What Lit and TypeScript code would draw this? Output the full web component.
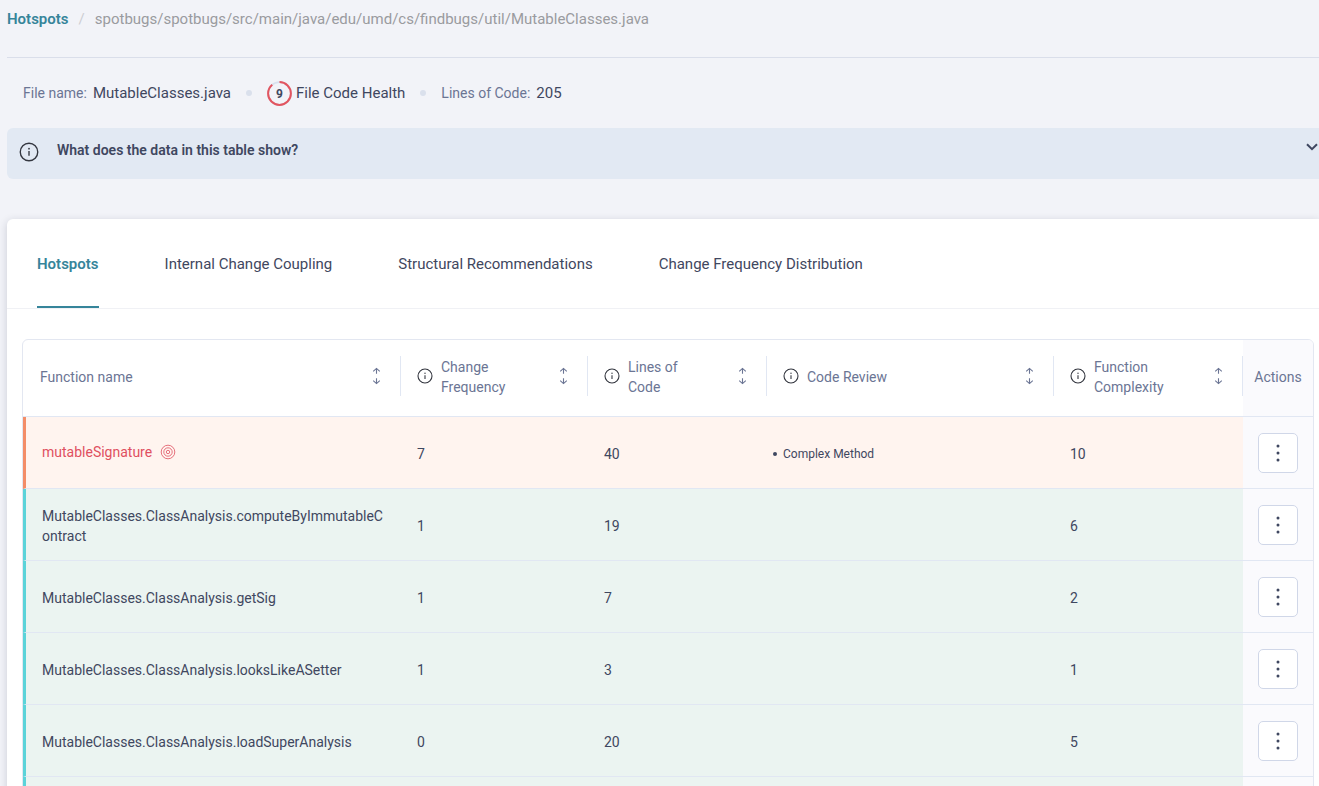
import { LitElement, html, css, svg, nothing } from "lit";
import { customElement, state } from "lit/decorators.js";

interface FunctionRow {
  name: string;
  frequency: string;
  lines: string;
  review: string[];
  complexity: string;
  level: "alert" | "healthy";
  target?: boolean;
}

const ROWS: FunctionRow[] = [
  { name: "mutableSignature", frequency: "7", lines: "40", review: ["Complex Method"], complexity: "10", level: "alert", target: true },
  { name: "MutableClasses.ClassAnalysis.computeByImmutableContract", frequency: "1", lines: "19", review: [], complexity: "6", level: "healthy" },
  { name: "MutableClasses.ClassAnalysis.getSig", frequency: "1", lines: "7", review: [], complexity: "2", level: "healthy" },
  { name: "MutableClasses.ClassAnalysis.looksLikeASetter", frequency: "1", lines: "3", review: [], complexity: "1", level: "healthy" },
  { name: "MutableClasses.ClassAnalysis.loadSuperAnalysis", frequency: "0", lines: "20", review: [], complexity: "5", level: "healthy" },
  { name: "", frequency: "", lines: "", review: [], complexity: "", level: "healthy" },
];

const COLUMNS = [
  { label: "Function name", info: false },
  { label: "Change Frequency", info: true },
  { label: "Lines of Code", info: true },
  { label: "Code Review", info: true },
  { label: "Function Complexity", info: true },
];

const TABS = [
  "Hotspots",
  "Internal Change Coupling",
  "Structural Recommendations",
  "Change Frequency Distribution",
];

const infoIcon = (size: number) => svg`
  <svg class="info" width=${size} height=${size} viewBox="0 0 16 16" aria-hidden="true">
    <circle cx="8" cy="8" r="7" fill="none" stroke="currentColor" stroke-width="1.1"></circle>
    <path d="M8 7.2V11" stroke="currentColor" stroke-width="1.1"></path>
    <circle cx="8" cy="5.3" r="0.7" fill="currentColor"></circle>
  </svg>`;

const sortIcon = svg`
  <svg width="9" height="18" viewBox="0 0 9 18" fill="none" stroke="currentColor" stroke-width="1.1" aria-hidden="true">
    <path d="M4.5 6.8V1.6M1.2 4.4L4.5 1.4L7.8 4.4M4.5 11.2V16.4M1.2 13.6L4.5 16.6L7.8 13.6"></path>
  </svg>`;

const targetIcon = svg`
  <svg class="target" width="16" height="16" viewBox="0 0 16 16" fill="none" stroke="currentColor" stroke-width="0.8" aria-hidden="true">
    <circle cx="8" cy="8" r="6.8"></circle>
    <circle cx="8" cy="8" r="4.2"></circle>
    <circle cx="8" cy="8" r="1.7"></circle>
  </svg>`;

@customElement("app-root")
export class AppRoot extends LitElement {
  @state() private activeTab = 0;

  static styles = css`
    :host {
      display: block;
      box-sizing: border-box;
      height: 100vh;
      overflow: hidden;
      padding-left: 7px;
      background: #f2f3f8;
      color: #3f4760;
      font-family: Roboto, "Liberation Sans", sans-serif;
      font-size: 14px;
      line-height: 20px;
    }
    * { box-sizing: border-box; }
    button {
      font: inherit;
      color: inherit;
      background: none;
      border: 0;
      padding: 0;
      cursor: pointer;
    }
    svg { display: block; flex: none; }
    .breadcrumb {
      display: flex;
      gap: 10px;
      height: 58px;
      padding-top: 9px;
      border-bottom: 1px solid #dadeea;
      font-size: 15px;
      color: #9a9b9f;
    }
    .breadcrumb a { color: #36859a; font-weight: 600; text-decoration: none; }
    .slash { color: #cdced3; }
    .summary {
      display: flex;
      align-items: center;
      height: 70px;
      padding-left: 16px;
      font-size: 15px;
    }
    .summary .key { font-size: 14px; color: #6b7594; margin-right: 6px; }
    .dot {
      width: 6px;
      height: 6px;
      margin: 0 15px;
      border-radius: 50%;
      background: #dae0ec;
    }
    .ring { margin-right: 4px; }
    .ring text { font-size: 12px; font-weight: 700; fill: #3f4760; }
    .banner {
      display: flex;
      justify-content: space-between;
      width: 100%;
      height: 51px;
      padding: 12px 1px 0 12px;
      border-radius: 6px 0 0 6px;
      background: #e2e9f3;
      font-size: 14px;
      font-weight: 600;
      text-align: left;
    }
    .banner .question { display: flex; gap: 18px; }
    .banner .info { color: #33363f; margin-top: 2px; }
    .banner .chevron { margin-top: 2px; }
    .card {
      margin-top: 40px;
      min-height: 100vh;
      border-radius: 6px 0 0 0;
      background: #fff;
      box-shadow: 0 2px 8px rgba(30, 35, 60, 0.18);
    }
    .tabs {
      display: flex;
      gap: 66px;
      height: 90px;
      padding-left: 30px;
      border-bottom: 1px solid #f0f1f5;
      font-size: 15px;
    }
    .tab { height: 89px; padding-top: 2px; border-bottom: 2px solid transparent; white-space: nowrap; }
    .tab.active { color: #36859a; border-color: #36859a; font-weight: 600; }
    .frame {
      margin: 30px 5px 0 15px;
      border: 1px solid #e3e7f1;
      border-radius: 6px;
      overflow: hidden;
    }
    table {
      width: 100%;
      table-layout: fixed;
      border-collapse: separate;
      border-spacing: 0;
    }
    .c-frequency { width: 187px; }
    .c-lines { width: 179px; }
    .c-review { width: 287px; }
    .c-complexity { width: 189px; }
    .c-actions { width: 70px; }
    th {
      height: 77px;
      padding: 16px 0 20px;
      border-bottom: 1px solid #e1e7f3;
      color: #6b7594;
      font-weight: 400;
      text-align: left;
    }
    .head {
      display: flex;
      align-items: center;
      gap: 8px;
      height: 40px;
      padding: 0 19px 0 17px;
      border-right: 1px solid #e1e7f3;
    }
    .head .info { color: #33363f; }
    .head .label { flex: 1; padding-top: 2px; }
    .info-head { padding-left: 16px; }
    .info-head .label { padding-right: 32px; }
    .sort { display: flex; }
    th.actions { padding-top: 18px; text-align: center; }
    .actions { background: #fafafd; }
    td {
      height: 72px;
      padding: 2px 12px 0 16px;
      border-bottom: 1px solid #e1e7f3;
      word-break: break-all;
    }
    .name { border-left: 3px solid #5bd3d9; }
    .alert .name { padding-bottom: 4px; border-left-color: #f38d68; color: #e04f5f; }
    .alert td { background: #fff4ef; }
    .healthy td { background: #ebf4f1; }
    .name-line { display: flex; align-items: center; gap: 8px; }
    tr td.actions { padding: 0; background: #fafafd; }
    ul {
      margin: 0;
      padding: 0;
      list-style: none;
      font-size: 12px;
    }
    li { display: flex; align-items: center; gap: 6px; margin-left: -10px; }
    li::before {
      content: "";
      width: 4px;
      height: 4px;
      border-radius: 50%;
      background: currentColor;
    }
    .menu {
      display: flex;
      align-items: center;
      justify-content: center;
      width: 40px;
      height: 40px;
      margin: 0 auto;
      border: 1px solid #d0d7e8;
      border-radius: 5px;
      background: #fff;
    }
  `;

  private renderRow(row: FunctionRow) {
    return html`
      <tr class=${row.level}>
        <td class="name">
          <div class="name-line"><span>${row.name}</span>${row.target ? targetIcon : nothing}</div>
        </td>
        <td>${row.frequency}</td>
        <td>${row.lines}</td>
        <td>${row.review.length ? html`<ul>${row.review.map((r) => html`<li>${r}</li>`)}</ul>` : nothing}</td>
        <td>${row.complexity}</td>
        <td class="actions">
          ${row.name
            ? html`<button class="menu" aria-label="Actions">
                <svg width="4" height="20" viewBox="0 0 4 20" fill="currentColor" aria-hidden="true">
                  <circle cx="2" cy="3" r="1.5"></circle>
                  <circle cx="2" cy="10" r="1.5"></circle>
                  <circle cx="2" cy="17" r="1.5"></circle>
                </svg>
              </button>`
            : nothing}
        </td>
      </tr>`;
  }

  render() {
    return html`
      <nav class="breadcrumb">
        <a href="#">Hotspots</a><span class="slash">/</span>
        <span>spotbugs/spotbugs/src/main/java/edu/umd/cs/findbugs/util/MutableClasses.java</span>
      </nav>
      <div class="summary">
        <span class="key">File name:</span><span>MutableClasses.java</span>
        <span class="dot"></span>
        <svg class="ring" width="25" height="25" viewBox="0 0 25 25">
          <circle cx="12.5" cy="12.5" r="11.4" fill="none" stroke="#d9e1ee" stroke-width="1.8"></circle>
          <circle cx="12.5" cy="12.5" r="11.4" fill="none" stroke="#e25560" stroke-width="2"
            pathLength="100" stroke-dasharray="89 11" transform="rotate(-90 12.5 12.5)"></circle>
          <text x="12.5" y="17" text-anchor="middle">9</text>
        </svg>
        <span>File Code Health</span>
        <span class="dot"></span>
        <span class="key">Lines of Code:</span><span>205</span>
      </div>
      <button class="banner" aria-expanded="false">
        <span class="question">${infoIcon(20)}<span>What does the data in this table show?</span></span>
        <svg class="chevron" width="12" height="10" viewBox="0 0 12 10" fill="none" stroke="currentColor" stroke-width="2" aria-hidden="true">
          <path d="M1 2.2L6 7.2L11 2.2"></path>
        </svg>
      </button>
      <main class="card">
        <div class="tabs" role="tablist">
          ${TABS.map((tab, i) => html`
            <button class="tab ${i === this.activeTab ? "active" : ""}" role="tab"
              aria-selected=${i === this.activeTab ? "true" : "false"}
              @click=${() => (this.activeTab = i)}>${tab}</button>`)}
        </div>
        <div class="frame">
          <table>
            <colgroup>
              <col><col class="c-frequency"><col class="c-lines"><col class="c-review"><col class="c-complexity"><col class="c-actions">
            </colgroup>
            <thead>
              <tr>
                ${COLUMNS.map((c) => html`
                  <th scope="col">
                    <div class="head ${c.info ? "info-head" : ""}">
                      ${c.info ? infoIcon(16) : nothing}
                      <span class="label">${c.label}</span>
                      <button class="sort" aria-label="Sort by ${c.label}">${sortIcon}</button>
                    </div>
                  </th>`)}
                <th class="actions" scope="col">Actions</th>
              </tr>
            </thead>
            <tbody>${ROWS.map((r) => this.renderRow(r))}</tbody>
          </table>
        </div>
      </main>`;
  }
}
